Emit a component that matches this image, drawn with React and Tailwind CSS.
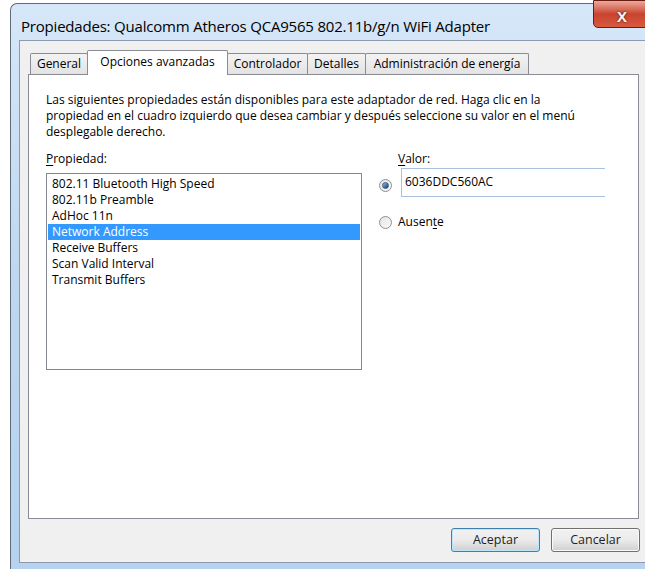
// Network adapter properties dialog — "Opciones avanzadas" tab

const font = { fontFamily: '"Open Sans", "Liberation Sans", sans-serif' };

const properties = [
  "802.11 Bluetooth High Speed",
  "802.11b Preamble",
  "AdHoc 11n",
  "Network Address",
  "Receive Buffers",
  "Scan Valid Interval",
  "Transmit Buffers",
];

const tabs = [
  { label: "General", w: "w-[58px]" },
  { label: "Opciones avanzadas", w: "w-[141px]", active: true },
  { label: "Controlador", w: "w-[81px]" },
  { label: "Detalles", w: "w-[59px]" },
  { label: "Administración de energía", w: "w-[164px]" },
];

const Radio = ({ checked }) => (
  <div className="w-[13px] h-[13px] rounded-full border border-[#8e8f8f] bg-gradient-to-br from-[#e6e6e6] to-[#f8f8f8] flex items-center justify-center shrink-0">
    {checked && (
      <div className="w-[7px] h-[7px] rounded-full bg-gradient-to-br from-[#9bc2e8] to-[#17375e] border border-[#3a5c86]" />
    )}
  </div>
);

const Button = ({ children, primary }) => (
  <button
    className={`w-[89px] h-[24px] rounded-[3px] text-[12.5px] text-[#1e1e1e] bg-gradient-to-b from-[#f2f2f2] via-[#ebebeb] to-[#cfcfcf]
      ${primary ? "border border-[#3c7fb1] shadow-[inset_0_0_0_1px_#bfe6fb]" : "border border-[#707070] shadow-[inset_0_0_0_1px_#fbfbfb]"}`}
  >
    {children}
  </button>
);

export default function App() {
  return (
    <div className="w-[645px] h-[569px] bg-white overflow-hidden" style={font}>
      <div className="ml-[10px] mt-[3px] w-[660px] h-[566px] rounded-tl-[7px] border-l border-t border-[#5f6b78] bg-gradient-to-b from-[#d6e7f8] via-[#bed7f0] to-[#b6d2ee] flex flex-col">
        {/* Title bar */}
        <div className="h-[36px] flex items-start relative">
          <div className="pl-[10px] pt-[11px] text-[15px] text-black tracking-[-0.2px]">
            Propiedades: Qualcomm Atheros QCA9565 802.11b/g/n WiFi Adapter
          </div>
          <div className="absolute left-[582px] -top-[4px] w-[60px] h-[28px] rounded-b-[5px] border border-[#6b1c12] bg-gradient-to-b from-[#e9a99c] via-[#c9432e] to-[#d8593e] flex items-start justify-center">
            <span className="text-[#f4f4f4] font-bold text-[15px] leading-none mt-[8px] -ml-[2px] [text-shadow:0_0_2px_#3a0a05]">
              X
            </span>
          </div>
        </div>

        {/* Client area */}
        <div className="ml-[8px] w-[640px] h-[523px] border border-[#8b9aac] bg-[#f0f0f0] flex flex-col">
          <div className="pl-[8px] pt-[9px]">
            {/* Tab strip */}
            <div className="flex items-end h-[24px] pl-[2px]">
              {tabs.map((t, i) =>
                t.active ? (
                  <div
                    key={t.label}
                    className={`${t.w} h-[25px] -mb-px -ml-px relative z-10 bg-white border-l border-t border-r border-[#898c95] rounded-t-[2px] text-[12px] text-black flex items-start justify-center pt-[2px]`}
                  >
                    {t.label}
                  </div>
                ) : (
                  <div
                    key={t.label}
                    className={`${t.w} h-[21px] ${i > 0 ? "-ml-px" : ""} bg-gradient-to-b from-[#f3f3f3] to-[#e3e3e3] border-l border-t border-r border-[#898c95] rounded-t-[2px] text-[12px] text-black flex items-center justify-center`}
                  >
                    {t.label}
                  </div>
                )
              )}
            </div>

            {/* Tab panel */}
            <div className="w-[611px] h-[445px] bg-white border border-[#898c95] px-[17px] pt-[17px] text-[12px] text-black">
              <p className="leading-[16px]">
                Las siguientes propiedades están disponibles para este adaptador de red. Haga clic en la
                <br />
                propiedad en el cuadro izquierdo que desea cambiar y después seleccione su valor en el menú
                <br />
                desplegable derecho.
              </p>

              <div className="flex mt-[11px]">
                <div className="flex flex-col">
                  <div className="leading-[16px]">
                    <span className="underline underline-offset-2">P</span>ropiedad:
                  </div>
                  <div className="mt-[6px] w-[316px] h-[197px] border border-[#828790] bg-white p-[1px] pt-[2px]">
                    {properties.map((p) => (
                      <div
                        key={p}
                        className={`h-[16px] leading-[16px] pl-[4px] ${p === "Network Address" ? "bg-[#3399ff] text-white w-[312px]" : ""}`}
                      >
                        {p}
                      </div>
                    ))}
                  </div>
                </div>

                <div className="ml-[17px] flex flex-col">
                  <div className="pl-[19px] leading-[16px]">
                    <span className="underline underline-offset-2">V</span>alor:
                  </div>
                  <div className="flex items-center mt-[1px]">
                    <div className="mt-[6px]">
                      <Radio checked />
                    </div>
                    <div className="ml-[9px] w-[204px] h-[29px] border-l border-t border-b border-[#a9c1dc] pl-[3px] pt-[5px] leading-[16px]">
                      6036DDC560AC
                    </div>
                  </div>
                  <div className="flex items-center mt-[17px]">
                    <Radio />
                    <span className="ml-[6px] leading-[16px]">
                      Ausen<span className="underline underline-offset-2">t</span>e
                    </span>
                  </div>
                </div>
              </div>
            </div>
          </div>

          {/* Dialog buttons */}
          <div className="flex gap-[11px] pl-[431px] mt-[9px]">
            <Button primary>Aceptar</Button>
            <Button>Cancelar</Button>
          </div>
        </div>
      </div>
    </div>
  );
}
